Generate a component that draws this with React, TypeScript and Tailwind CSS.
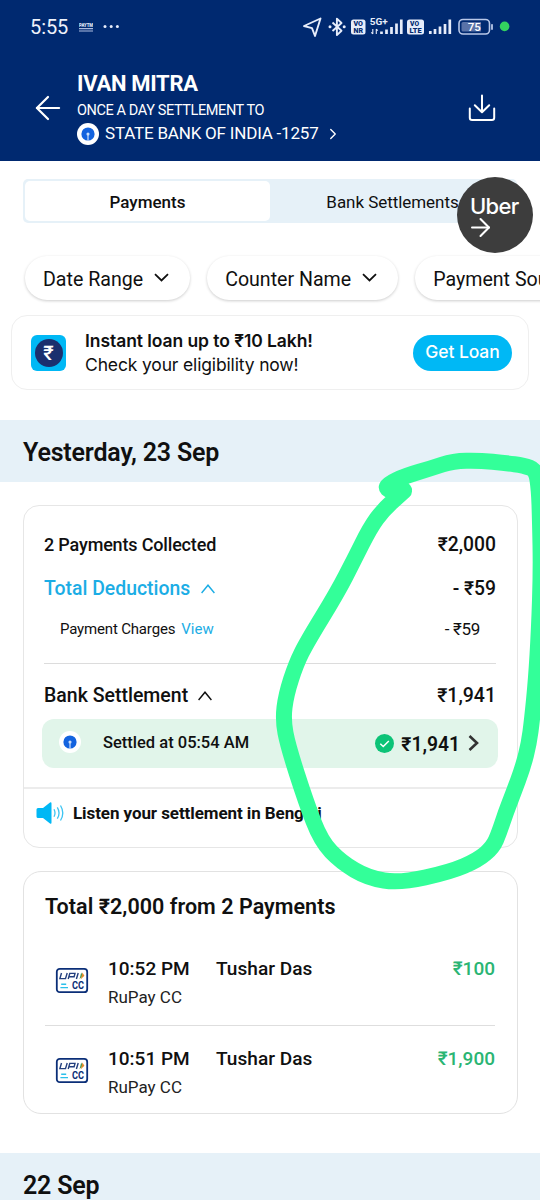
import { ArrowLeft, ArrowRight, ChevronRight } from 'lucide-react';

const FILTERS = ['Date Range', 'Counter Name', 'Payment Source'];

const PAYMENTS = [
  { time: '10:52 PM', name: 'Tushar Das', method: 'RuPay CC', amount: '₹100' },
  { time: '10:51 PM', name: 'Tushar Das', method: 'RuPay CC', amount: '₹1,900' },
];

const STROKE_POINTS = [
  [404, 490], [396, 492], [386, 489], [388, 484], [405, 476], [432, 468], [453, 461], [480, 460.5], [505, 463], [524, 465.5],
  [536, 470], [539, 490], [540, 520], [541, 570], [539, 630], [536, 680], [532, 720], [529, 743], [523, 767], [513, 794],
  [506, 812], [499, 833], [493, 847], [478, 860], [450, 872], [400, 883], [368, 878], [341, 862], [321, 841], [306, 802],
  [288, 746], [283, 720], [286, 695], [296, 664], [307, 642], [337, 593], [354, 560], [370, 528], [383, 510], [404, 491],
];

// joins the points with quadratic curves through the midpoints
function smoothPath(pts: number[][]) {
  let d = `M${pts[0][0]} ${pts[0][1]}`;
  for (let i = 1; i < pts.length - 1; i++) {
    const [x, y] = pts[i];
    const [nx, ny] = pts[i + 1];
    d += ` Q${x} ${y} ${(x + nx) / 2} ${(y + ny) / 2}`;
  }
  const last = pts[pts.length - 1];
  return `${d} L${last[0]} ${last[1]}`;
}

function SbiLogo({ className }: { className?: string }) {
  return (
    <svg viewBox="0 0 24 24" className={className}>
      <circle cx="12" cy="12" r="12" fill="#fff" />
      <circle cx="12" cy="12" r="7.2" fill="#1363df" />
      <circle cx="12" cy="12" r="1.7" fill="#c9defa" />
      <path d="M12 12v7" stroke="#c9defa" strokeWidth="1.3" />
    </svg>
  );
}

function CaretUp({ className }: { className?: string }) {
  return (
    <svg viewBox="0 0 14 10" className={className} fill="none" stroke="currentColor" strokeWidth="1.4">
      <path d="M0.6 9L7 1.2 13.4 9" />
    </svg>
  );
}

function CaretDown({ className }: { className?: string }) {
  return (
    <svg viewBox="0 0 15 9" className={className} fill="none" stroke="currentColor" strokeWidth="1.8">
      <path d="M1 1.2l6.5 6.2L14 1.2" />
    </svg>
  );
}

function UpiCard() {
  return (
    <svg viewBox="0 0 34 27" className="w-[34px] h-[27px] shrink-0">
      <rect x="1.8" y="1.8" width="30.4" height="23.4" rx="3" fill="#fff" stroke="#0b2f78" strokeWidth="1.8" />
      <g fill="none" stroke="#24407f" strokeWidth="1.4">
        <path d="M6.5 6l-1.6 5.6h5.6L12.2 6M13.2 12l1.6-5.6h5.2l-.9 3.3h-5M21.4 12L23.2 6" />
      </g>
      <path d="M26.2 5.4l1.5 3.4-3.2 3.4z" fill="#3c9b57" />
      <path d="M27.4 5.4l2 3.4-3.6 3.4z" fill="#e38b2c" />
      <path d="M6.2 17.2h5M5.4 20.6h7.6" stroke="#2bc0ea" strokeWidth="1.4" />
      <text x="17" y="22.4" fontFamily="Roboto, sans-serif" fontWeight="700" fontSize="10" fill="#0b2f78" textLength="12" lengthAdjust="spacingAndGlyphs">CC</text>
    </svg>
  );
}

function StatusIcons() {
  return (
    <svg viewBox="0 0 212 24" className="w-[212px] h-6" fill="none" fontFamily="Roboto, sans-serif">
      <path d="M20.5 3.5L4 11l8 2.2 3 7.8z" stroke="#e6ecfa" strokeWidth="1.9" strokeLinejoin="round" />
      <path d="M32.5 7.5l9 8.2-4.6 4.4V3.6l4.6 4.4-9 8" stroke="#e6ecfa" strokeWidth="1.9" strokeLinejoin="round" />
      <circle cx="30" cy="11.8" r="1.5" fill="#e6ecfa" />
      <circle cx="44.2" cy="11.8" r="1.5" fill="#e6ecfa" />
      <rect x="51" y="4.5" width="14.5" height="15" rx="2.5" fill="#e6ecfa" />
      <text x="53.5" y="11.4" fontSize="7" fontWeight="900" fill="#002970" textLength="9.5" lengthAdjust="spacingAndGlyphs">VO</text>
      <text x="53.5" y="18.2" fontSize="7" fontWeight="900" fill="#002970" textLength="9.5" lengthAdjust="spacingAndGlyphs">NR</text>
      <text x="69.7" y="9.8" fontSize="9" fontWeight="700" fill="#e6ecfa" textLength="18" lengthAdjust="spacingAndGlyphs">5G+</text>
      <path d="M72.8 14v5M76.3 19v-5M71.3 17.3l1.5 1.7M77.8 15.7l-1.5-1.7" stroke="#e6ecfa" strokeWidth="1.1" />
      <path d="M81.5 19v-2.5M86.5 19v-4.5M91.5 19v-7M96.5 19v-10.5M101.3 19V4.5" stroke="#e6ecfa" strokeWidth="2.7" />
      <rect x="107" y="4.5" width="17" height="15" rx="2.5" fill="#e6ecfa" />
      <text x="110" y="11.4" fontSize="7" fontWeight="900" fill="#002970" textLength="9" lengthAdjust="spacingAndGlyphs">VO</text>
      <text x="109.5" y="18.2" fontSize="7" fontWeight="900" fill="#002970" textLength="12" lengthAdjust="spacingAndGlyphs">LTE</text>
      <path d="M130.3 19v-3M135 19v-5M140 19v-7.5M145 19v-10M149.8 19V4.5" stroke="#e6ecfa" strokeWidth="2.7" />
      <rect x="159" y="4.5" width="30.5" height="14.5" rx="4" stroke="#b9c8e8" strokeWidth="1.6" />
      <path d="M161.5 8.6q0-1.6 1.6-1.6H181v9.6h-17.9q-1.6 0-1.6-1.6z" fill="#5972a8" />
      <path d="M192 9.8v4.2" stroke="#b9c8e8" strokeWidth="1.8" strokeLinecap="round" />
      <text x="174.3" y="16" textAnchor="middle" fontSize="11.5" fontWeight="500" fill="#fff">75</text>
      <circle cx="204.6" cy="11.4" r="4.8" fill="#33d35f" />
    </svg>
  );
}

function Header() {
  return (
    <header className="h-[161px] bg-[#002970] text-white">
      <div className="h-[52px] pt-[2px] pl-[30px] pr-[28px] flex items-center">
        <span className="text-[20px] tracking-[-0.1px] text-[#eef2fb]">5:55</span>
        <svg viewBox="0 0 14 12" className="w-3.5 h-3 ml-[11px]">
          <text x="0" y="6" fontFamily="Roboto, sans-serif" fontWeight="900" fontSize="5.5" fill="#dfe7f8" textLength="14" lengthAdjust="spacingAndGlyphs">PAYTM</text>
          <path d="M0 7.6h14M0 10h14" stroke="#aebde0" strokeWidth="1.2" />
        </svg>
        <svg viewBox="0 0 18 4" className="w-[18px] h-1 ml-[9px]" fill="#e6ecfa">
          <circle cx="3" cy="1.6" r="1.5" />
          <circle cx="9.2" cy="1.6" r="1.5" />
          <circle cx="15.4" cy="1.6" r="1.5" />
        </svg>
        <div className="ml-auto">
          <StatusIcons />
        </div>
      </div>
      <div className="flex items-center pl-[29px] pr-[44px] pt-[18px]">
        <ArrowLeft className="w-[38px] h-[38px] shrink-0" strokeWidth={1.4} />
        <div className="ml-[10px] flex-1">
          <h1 className="text-[22px] leading-[28px] font-bold tracking-[-0.3px]">IVAN MITRA</h1>
          <p className="pt-px text-[14.5px] leading-[23px] tracking-[-0.4px]">ONCE A DAY SETTLEMENT TO</p>
          <div className="flex items-center h-[23px]">
            <SbiLogo className="w-[22px] h-[22px]" />
            <span className="ml-[6px] text-[17px] tracking-[-0.2px] whitespace-nowrap">STATE BANK OF INDIA -1257</span>
            <ChevronRight className="w-[18px] h-[18px] ml-[5px]" strokeWidth={1.8} />
          </div>
        </div>
        <svg viewBox="0 0 28 28" className="w-7 h-7" fill="none" stroke="#fff" strokeWidth="2" strokeLinecap="round" strokeLinejoin="round">
          <path d="M14 1.5v16.5M6.800 11.2L14 18.2l7.2-7M1.8 14.5v9.2q0 2.300 2.300 2.300h19.800q2.300 0 2.300-2.300v-9.2" />
        </svg>
      </div>
    </header>
  );
}

function LoanBanner() {
  return (
    <div className="mx-[11px] mt-[15px] h-[75px] rounded-[16px] border border-[#efefef] flex items-center pl-[19px] pr-[16px] font-[Inter,sans-serif]">
      <div className="w-[35px] h-[36px] rounded-[6px] bg-[#00b8f5] flex items-center justify-center">
        <div className="w-[28px] h-[28px] rounded-full bg-[#1b2f6e] text-white font-[Roboto,sans-serif] text-[20px] font-medium flex items-center justify-center">₹</div>
      </div>
      <div className="ml-[19px] flex-1 text-[17.5px] leading-[24px] whitespace-nowrap">
        <p className="font-semibold tracking-[-0.07px]">Instant loan up to ₹10 Lakh!</p>
        <p className="tracking-[-0.15px]">Check your eligibility now!</p>
      </div>
      <button className="w-[99px] h-[36px] rounded-full bg-[#00b8f5] text-white text-[17.5px] font-medium tracking-[-0.1px] whitespace-nowrap">Get Loan</button>
    </div>
  );
}

function SettlementCard() {
  return (
    <section className="ml-[23px] mr-[22px] mt-[23px] h-[343px] rounded-[16px] border border-[#e6e6e6] text-[18px] font-medium">
      <div className="pl-[20px] pr-[21px] pt-[16px]">
        <div className="h-[45px] pb-px flex items-center justify-between">
          <span className="tracking-[-0.17px]">2 Payments Collected</span>
          <span className="pt-[2px] text-[19.3px]">₹2,000</span>
        </div>
        <div className="h-[44px] flex items-center text-[#1badE5]">
          <span className="text-[19.4px]">Total Deductions</span>
          <CaretUp className="w-[14px] h-[10px] ml-[11px]" />
          <span className="ml-auto text-[19.3px] text-[#101010]">- ₹59</span>
        </div>
        <div className="h-[37px] pl-[16px] pr-[16px] flex items-center text-[15px] font-normal">
          <span className="tracking-[-0.17px]">Payment Charges</span>
          <span className="ml-[6px] text-[#1badE5]">View</span>
          <span className="ml-auto text-[17px] tracking-[-0.3px]">- ₹59</span>
        </div>
        <div className="mt-[15px] h-px bg-[#dcdcdc]" />
        <div className="h-[55px] pt-[9px] flex items-center text-[19.5px]">
          <span>Bank Settlement</span>
          <CaretUp className="w-[14px] h-[10px] ml-[10px]" />
          <span className="ml-auto">₹1,941</span>
        </div>
      </div>
      <div className="ml-[18px] mr-[19px] h-[49px] rounded-[12px] bg-[#e1f5ea] flex items-center pl-[17px] pr-[18px]">
        <SbiLogo className="w-[22px] h-[22px] -mt-[4px]" />
        <span className="ml-[22px] text-[16.5px] -mt-px">Settled at 05:54 AM</span>
        <svg viewBox="0 0 18 18" className="w-[19px] h-[19px] ml-auto" fill="none">
          <circle cx="9" cy="9" r="9" fill="#0cc377" />
          <path d="M5 9.3l2.8 2.6 5.3-5.3" stroke="#fff" strokeWidth="1.4" />
        </svg>
        <span className="ml-[7px] pt-[3px] text-[19.3px] font-semibold">₹1,941</span>
        <svg viewBox="0 0 12 18" className="w-3 h-[18px] ml-[8px] -mt-[2px]" fill="none">
          <path d="M1.5 2L9 9l-7.5 7" stroke="#333" strokeWidth="2.6" />
        </svg>
      </div>
      <div className="mt-[19px] h-[2px] bg-[#ececec]" />
      <div className="h-[50px] pl-[12px] flex items-center">
        <svg viewBox="0 0 28 24" className="w-7 h-6 -mt-[3px]" fill="none">
          <path d="M0.5 8.5q0-1.5 1.5-1.5h5L14 1.5q1.5-.8 1.5 1v19q0 1.8-1.5 1L7 17H2q-1.5 0-1.5-1.5z" fill="#00b8f5" />
          <path d="M18 8.3q2 3.7 0 7.4M21.3 6.3q3.5 5.7 0 11.4M24.5 4.5q4.6 7.5 0 15" stroke="#3cc4f2" strokeWidth="1.3" />
        </svg>
        <span className="ml-[9px] text-[17px] font-bold tracking-[-0.08px]">Listen your settlement in Bengali</span>
      </div>
    </section>
  );
}

function PaymentsCard() {
  return (
    <section className="ml-[23px] mr-[22px] mt-[23px] h-[243px] rounded-[18px] border border-[#e2e2e2] pl-[21px] pr-[22px]">
      <h2 className="pt-[20px] text-[21.5px] leading-[30px] font-semibold tracking-[0.04px]">Total ₹2,000 from 2 Payments</h2>
      <div className="mt-[15px] divide-y divide-[#dedede]">
        {PAYMENTS.map((p) => (
          <div key={p.time} className="h-[89px] pt-[4px] flex items-center">
            <div className="ml-[10px] -mt-[5px]">
              <UpiCard />
            </div>
            <div className="ml-[19px] w-[109px]">
              <p className="text-[19px] leading-[28px] font-medium">{p.time}</p>
              <p className="text-[17px] leading-[28px] text-[#222]">{p.method}</p>
            </div>
            <span className="-ml-px text-[19.1px] leading-[28px] font-medium pb-[28px]">{p.name}</span>
            <span className="ml-auto text-[19px] leading-[28px] font-medium pb-[28px] text-[#2ab573]">{p.amount}</span>
          </div>
        ))}
      </div>
    </section>
  );
}

export default function App() {
  return (
    <div className="relative w-[540px] h-[1200px] overflow-hidden bg-white text-[#101010] font-[Roboto,sans-serif]">
      <Header />

      <div className="mx-[23px] mt-[18px] h-[44px] rounded-[5px] bg-[#e6f1f8] p-[2px] flex items-center text-center text-[17px]">
        <div className="w-[245px] h-full rounded-[5px] bg-white font-medium leading-[42px]">Payments</div>
        <div className="flex-1 pt-px leading-[42px] tracking-[-0.05px]">Bank Settlements</div>
      </div>

      <div className="mt-[33px] pl-[25px] flex gap-[17px]">
        {FILTERS.map((label) => (
          <button key={label} className="h-[44px] shrink-0 rounded-full pt-[3px] pl-[18px] pr-[21px] flex items-center gap-[11px] text-[19.6px] whitespace-nowrap shadow-[0_1px_3px_rgba(0,0,0,0.2)]">
            {label}
            <CaretDown className="w-[15px] h-[9px] -mt-[4px]" />
          </button>
        ))}
      </div>

      <LoanBanner />

      <div className="mt-[30px] h-[62px] bg-[#e6f1f8] pl-[23px] pt-[3px] flex items-center text-[25px] font-semibold tracking-[-0.18px]">Yesterday, 23 Sep</div>
      <SettlementCard />
      <PaymentsCard />
      <div className="mt-[39px] h-[62px] bg-[#e6f1f8] pl-[23px] pt-[4px] flex items-center text-[25px] font-semibold tracking-[-0.18px]">22 Sep</div>

      {/* floating ride shortcut */}
      <div className="absolute left-[457px] top-[177px] w-[76px] h-[76px] rounded-full bg-[#3d3d3d] text-white pl-[13px] pt-[16px]">
        <p className="font-[Inter,sans-serif] text-[22px] leading-[26px] font-medium tracking-[-0.7px]">Uber</p>
        <ArrowRight className="w-[29px] h-[29px] -ml-[4px] -mt-[6px]" strokeWidth={1.7} />
      </div>

      {/* marker stroke around the amounts */}
      <svg viewBox="0 0 540 1200" className="absolute inset-0 w-[540px] h-[1200px] pointer-events-none" fill="none">
        <path d={smoothPath(STROKE_POINTS)} stroke="#33ff99" strokeWidth="16" strokeLinecap="round" strokeLinejoin="round" />
      </svg>
    </div>
  );
}
